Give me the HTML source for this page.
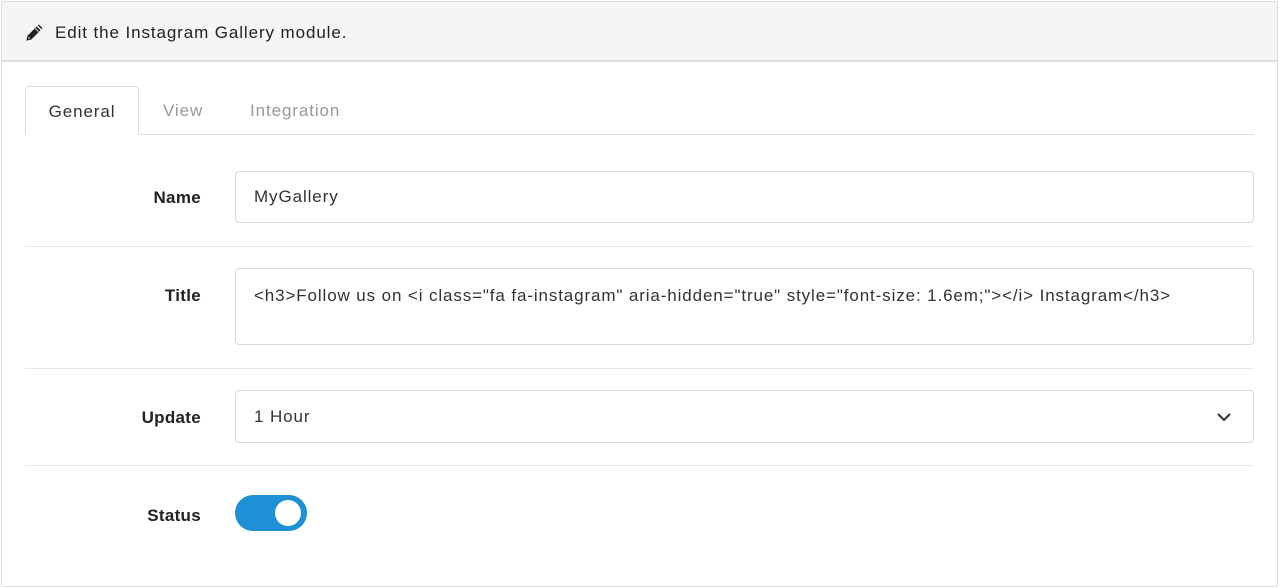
<!DOCTYPE html>
<html><head><style>
*{box-sizing:border-box;margin:0;padding:0}
body{width:1279px;height:588px;background:#fff;font-family:"Liberation Sans",sans-serif;color:#333;position:relative;overflow:hidden;letter-spacing:0.9px}
.outer{position:absolute;left:1px;top:1px;width:1277px;height:586px;border:1px solid #dcdcdc;border-radius:2px}
.head{position:absolute;left:2px;top:2px;width:1275px;height:60px;background:#f5f5f5;border-bottom:2px solid #dedede}
.head span{position:absolute;left:53px;top:21px;font-size:17px;color:#222}
.tabline{position:absolute;left:25px;top:134px;width:1229px;height:1px;background:#ddd}
.tab{position:absolute;top:86px;height:49px;font-size:17px;padding-top:15px}
.tab.act{left:25px;width:114px;border:1px solid #ddd;border-bottom:1px solid #fff;border-radius:4px 4px 0 0;background:#fff;text-align:center;color:#333}
.sep{position:absolute;left:25px;width:1229px;height:1px;background:#e8e8e8}
.lbl{position:absolute;right:1078px;font-weight:bold;font-size:17px;color:#222;letter-spacing:0.3px}
.inp{position:absolute;left:235px;width:1019px;border:1px solid #d9d9d9;border-radius:4px;font-size:17px;padding-left:18px;color:#333}
.tog{position:absolute;left:235px;top:495px;width:72px;height:36px;border-radius:18px;background:#1e90d6}
.tog::after{content:"";position:absolute;right:6px;top:5px;width:26px;height:26px;border-radius:50%;background:#fff}
</style></head><body>
<div class="outer"></div>
<div class="head">
<svg style="position:absolute;left:23px;top:22px" width="18" height="18" viewBox="0 0 20 20"><path d="M1.5 18.5 L2.8 13 L13 2.8 L17.2 7 L7 17.2 Z" fill="#222"/><path d="M14.2 1.6 L15.4 0.6 L19.4 4.6 L18.4 5.8 Z" fill="#222"/><path d="M3.6 16.4 L4.2 14.2 L5.8 15.8 Z" fill="#f5f5f5"/><path d="M11.5 5 L15 8.5" stroke="#f5f5f5" stroke-width="1"/></svg>
<span>Edit the Instagram Gallery module.</span></div>
<div class="tabline"></div>
<div class="tab act">General</div>
<div class="tab" style="left:163px;color:#999">View</div>
<div class="tab" style="left:250px;color:#999">Integration</div>
<div class="lbl" style="top:188px">Name</div>
<div class="inp" style="top:171px;height:52px;line-height:50px">MyGallery</div>
<div class="sep" style="top:246px"></div>
<div class="lbl" style="top:286px">Title</div>
<div class="inp" style="top:268px;height:77px;padding-top:17px;letter-spacing:0.88px">&lt;h3&gt;Follow us on &lt;i class="fa fa-instagram" aria-hidden="true" style="font-size: 1.6em;"&gt;&lt;/i&gt; Instagram&lt;/h3&gt;</div>
<div class="sep" style="top:368px"></div>
<div class="lbl" style="top:408px">Update</div>
<div class="inp" style="top:390px;height:53px;line-height:51px">1 Hour
<svg style="position:absolute;right:21px;top:20px" width="16" height="12" viewBox="0 0 16 12"><path d="M2 3 L8 9 L14 3" stroke="#333" stroke-width="2" fill="none"/></svg></div>
<div class="sep" style="top:465px"></div>
<div class="lbl" style="top:506px">Status</div>
<div class="tog"></div>
</body></html>
